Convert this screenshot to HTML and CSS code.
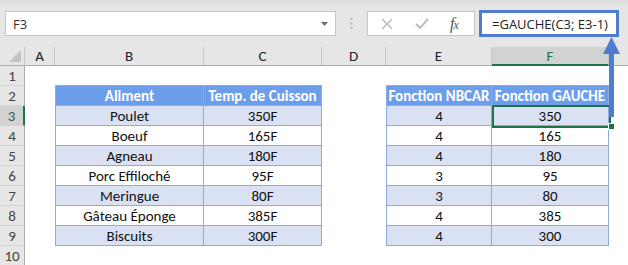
FILE: index.html
```html
<!DOCTYPE html>
<html lang="fr">
<head>
<meta charset="utf-8">
<link rel="stylesheet" href="styles.css">
</head>
<body>
<div class="app">
  <div class="toolbar">
    <div class="namebox">
      <span class="nb-text">F3</span>
      <svg class="nb-arrow" width="7" height="4" viewBox="0 0 7 4"><path d="M0 0H7L3.5 4Z" fill="#6d6d6d"/></svg>
    </div>
    <div class="dots">
      <svg width="3" height="11" viewBox="0 0 3 11"><rect x="0.5" y="0" width="2" height="2" fill="#b5b5b5"/><rect x="0.5" y="4.5" width="2" height="2" fill="#b5b5b5"/><rect x="0.5" y="9" width="2" height="2" fill="#b5b5b5"/></svg>
    </div>
    <div class="fbtns">
      <svg class="ico-x" width="12" height="12" viewBox="0 0 12 12"><path d="M1 1L11 11M11 1L1 11" stroke="#bdbdbd" stroke-width="1.6" fill="none"/></svg>
      <svg class="ico-check" width="14" height="11" viewBox="0 0 14 11"><path d="M1 6L5 10L13 1" stroke="#bdbdbd" stroke-width="2" fill="none"/></svg>
      <span class="fx">f<span class="fx-x">x</span></span>
    </div>
    <div class="formula">=GAUCHE(C3; E3-1)</div>
  </div>

  <div class="sheet">
    <div class="corner"><svg width="12" height="12" viewBox="0 0 12 12"><path d="M12 0V12H0Z" fill="#c4c4c4"/></svg></div>
    <div class="ch">A</div>
    <div class="ch">B</div>
    <div class="ch">C</div>
    <div class="ch">D</div>
    <div class="ch">E</div>
    <div class="ch ch-sel">F</div>
    <div class="ch ch-rest"></div>

    <div class="rh">1</div>
    <div class="rh">2</div>
    <div class="rh rh-sel">3</div>
    <div class="rh">4</div>
    <div class="rh">5</div>
    <div class="rh">6</div>
    <div class="rh">7</div>
    <div class="rh">8</div>
    <div class="rh">9</div>
    <div class="rh">10</div>

    <div class="tbl tbl-left">
      <div class="th">Aliment</div><div class="th">Temp. de Cuisson</div>
      <div class="td alt">Poulet</div><div class="td alt">350F</div>
      <div class="td">Boeuf</div><div class="td">165F</div>
      <div class="td alt">Agneau</div><div class="td alt">180F</div>
      <div class="td">Porc Effiloché</div><div class="td">95F</div>
      <div class="td alt">Meringue</div><div class="td alt">80F</div>
      <div class="td">Gâteau Éponge</div><div class="td">385F</div>
      <div class="td alt">Biscuits</div><div class="td alt">300F</div>
    </div>

    <div class="tbl tbl-right">
      <div class="th">Fonction NBCAR</div><div class="th">Fonction GAUCHE</div>
      <div class="td alt">4</div><div class="td alt">350</div>
      <div class="td">4</div><div class="td">165</div>
      <div class="td alt">4</div><div class="td alt">180</div>
      <div class="td">3</div><div class="td">95</div>
      <div class="td alt">3</div><div class="td alt">80</div>
      <div class="td">4</div><div class="td">385</div>
      <div class="td alt">4</div><div class="td alt">300</div>
    </div>
  </div>

  <div class="selection"></div>
  <div class="handle"></div>
  <svg class="arrow" width="22" height="82" viewBox="0 0 22 82">
    <path d="M11.5 2L20 19H3Z" fill="#4f7ccf"/>
    <rect x="9" y="18" width="5" height="64" fill="#4f7ccf"/>
  </svg>
</div>
</body>
</html>
```
FILE: styles.css
```css
* { box-sizing: border-box; }
html, body { margin: 0; padding: 0; background: #fff; }
.app {
  position: relative;
  width: 628px;
  height: 265px;
  overflow: hidden;
  font-family: Carlito, Lato, "Liberation Sans", sans-serif;
}
.toolbar {
  height: 47px;
  background: linear-gradient(#d9d9d9 0px, #e6e6e6 5px, #e6e6e6 100%);
  display: flex;
  align-items: flex-start;
  padding: 11px 0 0 5px;
}
.namebox {
  width: 331px;
  height: 25px;
  background: #fff;
  border: 1px solid #c6c6c6;
  display: flex;
  align-items: center;
  padding: 0 0 0 7px;
}
.nb-text {
  font-family: "Open Sans", sans-serif;
  font-size: 13px;
  color: #333;
  flex: 1;
}
.nb-arrow { margin-right: 7px; }
.dots {
  width: 31px;
  height: 25px;
  display: flex;
  align-items: center;
  justify-content: center;
}
.fbtns {
  width: 108px;
  height: 25px;
  background: #fff;
  border: 1px solid #c6c6c6;
  display: flex;
  align-items: center;
  padding-left: 13px;
}
.ico-x { margin-right: 22px; }
.ico-check { margin-right: 21px; }
.fx {
  font-family: "Liberation Serif", serif;
  font-style: italic;
  font-size: 16px;
  color: #555;
  letter-spacing: -1px;
}
.fx-x { font-size: 12px; }
.formula {
  margin: -1px 0 0 4px;
  width: 140px;
  height: 27px;
  background: #fff;
  border: 3px solid #4f7ccf;
  display: flex;
  align-items: center;
  padding-left: 10px;
  font-family: "Open Sans", sans-serif;
  font-size: 13px;
  color: #222;
  white-space: nowrap;
}
.sheet {
  display: grid;
  grid-template-columns: 25px 30px 149px 118px 64px 106px 117px 1fr;
  grid-template-rows: 19px repeat(10, 20px);
  background: #fff;
}
.corner {
  background: #e6e6e6;
  border-right: 1px solid #c6c6c6;
  border-bottom: 1px solid #ababab;
  display: flex;
  align-items: flex-end;
  justify-content: flex-end;
  padding: 0 3px 3px 0;
}
.ch {
  background: #e6e6e6;
  border-right: 1px solid #c6c6c6;
  border-bottom: 1px solid #ababab;
  font-size: 15px;
  color: #222;
  text-align: center;
  line-height: 19px;
}
.ch-sel {
  background: #d2d2d2;
  border-bottom: 2px solid #217346;
  color: #217346;
}
.ch-rest { border-right: none; }
.rh {
  grid-column: 1;
  background: #e6e6e6;
  border-right: 1px solid #ababab;
  border-bottom: 1px solid #d4d4d4;
  font-size: 15px;
  color: #444;
  text-align: center;
  line-height: 20px;
}
.rh-sel {
  background: #d2d2d2;
  border-right: 2px solid #217346;
  color: #2f5f4a;
}
.tbl {
  grid-row: 3 / 11;
  display: grid;
  grid-template-rows: repeat(8, 20px);
  border-left: 1px solid #8eaadb;
  border-top: 1px solid #8eaadb;
}
.tbl-left {
  grid-column: 3 / 5;
  grid-template-columns: 148px 118px;
  margin-top: -1px;
}
.tbl-right {
  grid-column: 6 / 8;
  grid-template-columns: 105px 117px;
  margin-top: -1px;
}
.th, .td {
  border-right: 1px solid #8eaadb;
  border-bottom: 1px solid #8eaadb;
  text-align: center;
  font-size: 15px;
  line-height: 20px;
  color: #111;
  white-space: nowrap;
}
.th {
  background: #6d9eeb;
  color: #fff;
  font-weight: bold;
}
.td.alt { background: #d9e1f2; }
.selection {
  position: absolute;
  left: 492px;
  top: 105px;
  width: 119px;
  height: 23px;
  border: 2px solid #217346;
}
.handle {
  position: absolute;
  left: 608px;
  top: 123px;
  width: 7px;
  height: 7px;
  background: #217346;
  border: 1px solid #fff;
}
.arrow {
  position: absolute;
  left: 600px;
  top: 35px;
}
```
